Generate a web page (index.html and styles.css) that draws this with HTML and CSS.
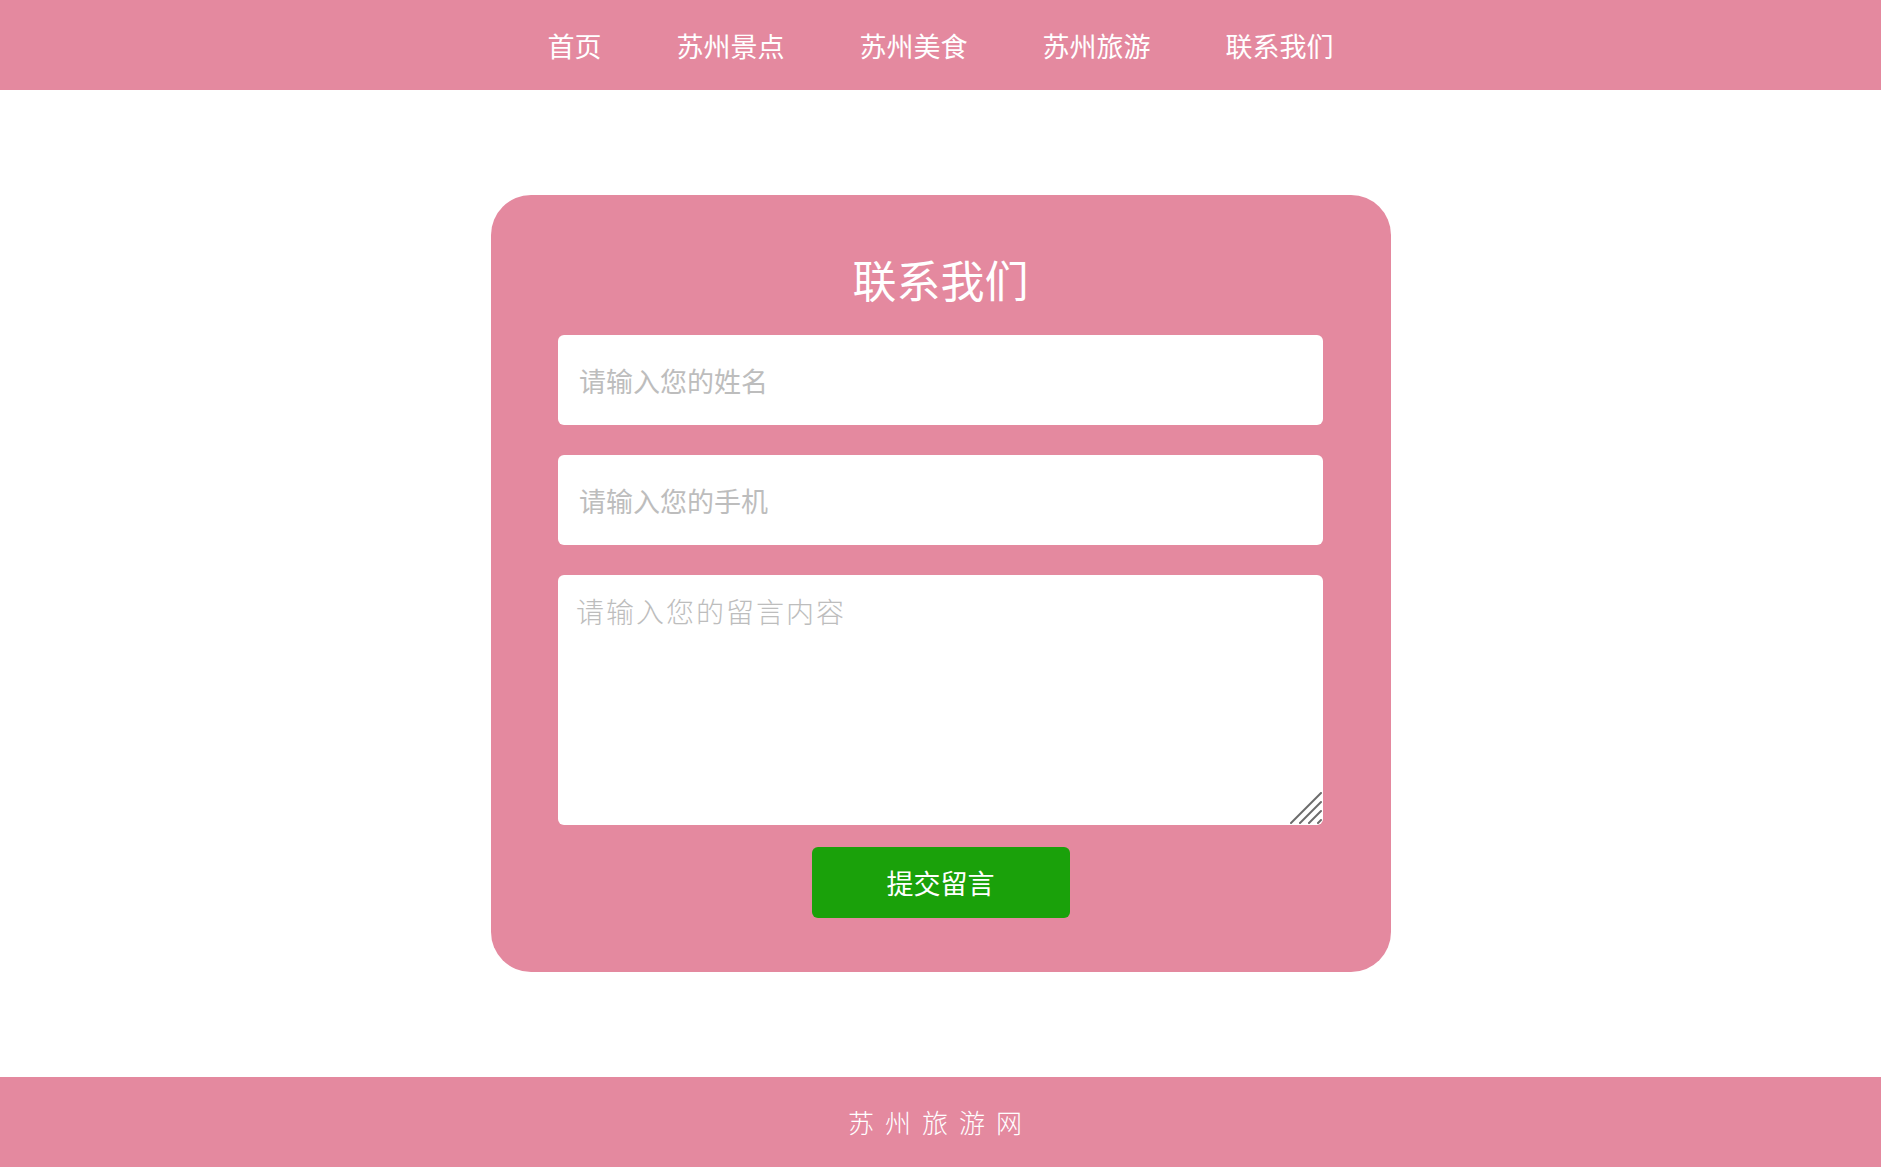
FILE: index.html
```html
<!DOCTYPE html>
<html lang="zh-CN">
<head>
  <meta charset="UTF-8">
  <meta name="viewport" content="width=device-width, initial-scale=1.0">
  <title>联系我们 - 苏州旅游网</title>
<link rel="stylesheet" href="styles.css">
</head>
<body>
  <!-- 导航 -->
  <nav class="nav">
    <ul class="nav-list">
      <li><a href="#">首页</a></li>
      <li><a href="#">苏州景点</a></li>
      <li><a href="#">苏州美食</a></li>
      <li><a href="#">苏州旅游</a></li>
      <li><a href="#">联系我们</a></li>
    </ul>
  </nav>

  <!-- 留言表单 -->
  <main class="main">
    <form class="contact-box">
      <h2 class="contact-title">联系我们</h2>
      <input type="text" class="field" placeholder="请输入您的姓名">
      <input type="text" class="field" placeholder="请输入您的手机">
      <div class="area-wrap">
        <textarea class="field-area" placeholder="请输入您的留言内容"></textarea>
        <svg class="grip" width="32" height="32" viewBox="0 0 32 32">
          <g stroke="#6b6b6b" stroke-width="2" stroke-linecap="round">
            <line x1="1" y1="31" x2="31" y2="1"/>
            <line x1="10" y1="31" x2="31" y2="10"/>
            <line x1="19" y1="31" x2="31" y2="19"/>
            <line x1="28" y1="31" x2="31" y2="28"/>
          </g>
        </svg>
      </div>
      <button type="button" class="submit-btn">提交留言</button>
    </form>
  </main>

  <footer class="footer">苏州旅游网</footer>
</body>
</html>
```

FILE: styles.css
```css
/* General */
* {
  box-sizing: border-box;
}

body {
  margin: 0;
  font-family: "Noto Sans CJK SC", "Liberation Sans", sans-serif;
  display: flex;
  flex-direction: column;
  min-height: 100vh;
  background: #fff;
}

/* Nav */
.nav {
  background: #e4899f;
  height: 90px;
}

.nav-list {
  list-style: none;
  margin: 0;
  padding: 4px 0 0;
  height: 100%;
  display: flex;
  justify-content: center;
  align-items: center;
  gap: 75px;
}

.nav-list a {
  color: #fff;
  text-decoration: none;
  font-size: 27px;
  line-height: 1;
}

/* Main */
.main {
  flex: 1;
  display: flex;
  justify-content: center;
  align-items: center;
}

.contact-box {
  width: 900px;
  background: #e4899f;
  border-radius: 40px;
  padding: 48px 0 54px;
  display: flex;
  flex-direction: column;
  align-items: center;
}

.contact-title {
  margin: 0 0 20px;
  color: #fff;
  font-size: 44px;
  line-height: 72px;
  font-weight: normal;
}

.field,
.field-area {
  width: 100%;
  border: none;
  border-radius: 6px;
  background: #fff;
  outline: none;
  font-family: inherit;
}

.field {
  width: 85%;
  height: 90px;
  margin-bottom: 30px;
  padding: 0 21px;
  font-size: 27px;
}

.area-wrap {
  position: relative;
  width: 85%;
  height: 250px;
}

.field-area {
  display: block;
  height: 100%;
  padding: 18px 18px;
  font-size: 28px;
  line-height: 36px;
  font-weight: 300;
  margin: 0;
  resize: none;
}

.grip {
  position: absolute;
  right: 1px;
  bottom: 1px;
  pointer-events: none;
}

.field::placeholder,
.field-area::placeholder {
  color: #bdbdbd;
}

.field-area::placeholder {
  letter-spacing: 2px;
}

.submit-btn {
  margin-top: 22px;
  width: 258px;
  height: 71px;
  border: none;
  border-radius: 6px;
  background: #1aa10a;
  color: #fff;
  font-family: inherit;
  font-size: 27px;
  cursor: pointer;
}

/* Footer */
.footer {
  background: #e4899f;
  height: 90px;
  line-height: 90px;
  text-align: center;
  color: #fff;
  font-size: 26px;
  letter-spacing: 11px;
  font-weight: 300;
}
```
